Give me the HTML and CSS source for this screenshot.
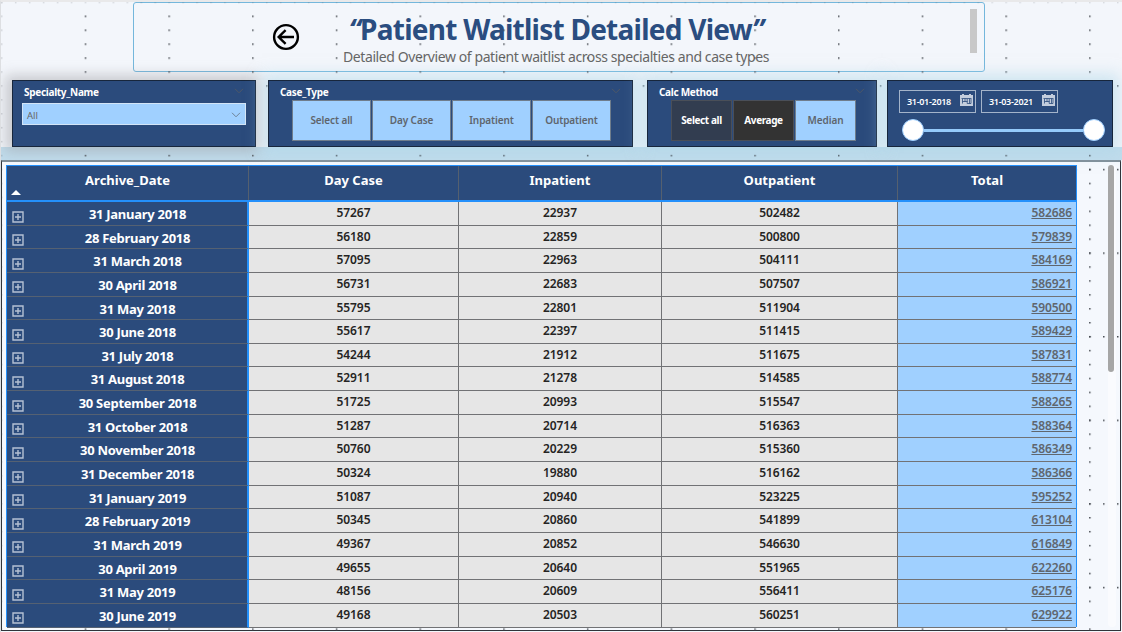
FILE: index.html
```html
<!DOCTYPE html>
<html lang="en">
<head>
<meta charset="utf-8">
<title>Patient Waitlist Detailed View</title>
<link rel="stylesheet" href="styles.css">
</head>
<body>
<div class="report">
  <svg class="grid-dots" width="1122" height="632" aria-hidden="true">
    <defs>
      <pattern id="cols" x="1" y="1.6" width="83.7" height="13.93" patternUnits="userSpaceOnUse"><rect x="0" y="0" width="1.5" height="1.5" fill="#454a50"/></pattern>
      <pattern id="rows" x="1" y="1.6" width="13.95" height="83.6" patternUnits="userSpaceOnUse"><rect x="0" y="0" width="1.5" height="1.5" fill="#454a50"/></pattern>
    </defs>
    <rect x="4" y="10" width="1118" height="622" fill="url(#cols)"/>
    <rect x="4" y="10" width="1118" height="622" fill="url(#rows)"/>
    <g opacity=".2"><rect width="4" height="632" fill="url(#cols)"/><rect y="1" width="1122" height="6" fill="url(#rows)"/></g>
  </svg>

  <header class="title-card">
    <svg class="back" viewBox="0 0 28 28"><circle cx="14" cy="14" r="11.9"/><path d="M22 14H6.5M13.6 7.2L6.7 14l6.9 6.8"/></svg>
    <div class="title-text">
      <h1><em>“</em>Patient Waitlist Detailed View<em>”</em></h1>
      <p>Detailed Overview of patient waitlist across specialties and case types</p>
    </div>
    <i class="title-scroll"></i>
  </header>

  <div class="filters">
    <section class="slicer specialty">
      <div class="slicer-head"><span>Specialty_Name</span><svg class="chev" viewBox="0 0 10 6"><path d="M1 .8l4 4 4-4"/></svg></div>
      <div class="dropdown"><span>All</span><svg class="chev" viewBox="0 0 10 6"><path d="M1 .8l4 4 4-4"/></svg></div>
    </section>
    <section class="slicer casetype">
      <div class="slicer-head"><span>Case_Type</span><svg class="chev" viewBox="0 0 10 6"><path d="M1 .8l4 4 4-4"/></svg></div>
      <div class="tiles"><b>Select all</b><b>Day Case</b><b>Inpatient</b><b>Outpatient</b></div>
    </section>
    <section class="slicer calc">
      <div class="slicer-head"><span>Calc Method</span><svg class="chev" viewBox="0 0 10 6"><path d="M1 .8l4 4 4-4"/></svg></div>
      <div class="tiles"><b class="hover">Select all</b><b class="on">Average</b><b>Median</b></div>
    </section>
    <section class="slicer dates">
      <div class="date-inputs">
        <div class="date"><span>31-01-2018</span><svg viewBox="0 0 13 12"><path class="cal-fill" d="M0 1h2V0h2v1h5V0h2v1h2v11H0z"/><path class="cal-ink" d="M1.5 4.5h10M2.5 5v4.5M5 4.5V8M7.2 5v4.5M9.5 4.5V9.500M11 5v4.500M2.500 7.500h5M7.200 9.500H11"/></svg></div>
        <div class="date"><span>31-03-2021</span><svg viewBox="0 0 13 12"><path class="cal-fill" d="M0 1h2V0h2v1h5V0h2v1h2v11H0z"/><path class="cal-ink" d="M1.5 4.5h10M2.5 5v4.5M5 4.5V8M7.2 5v4.5M9.5 4.5V9.500M11 5v4.500M2.500 7.500h5M7.200 9.500H11"/></svg></div>
      </div>
      <div class="range"><i class="knob"></i><i class="track"></i><i class="knob"></i></div>
    </section>
  </div>

  <main class="panel">
    <div class="matrix">
      <div class="row head">
        <div class="archive"><span>Archive_Date</span><i class="sort"></i></div><div>Day Case</div><div>Inpatient</div><div>Outpatient</div><div>Total</div>
      </div>
      <div class="body" id="body"></div>
    </div>
    <div class="scroll"><i></i></div>
  </main>
</div>
<script src="app.js"></script>
</body>
</html>
```
FILE: app.js
```js
const data = [
  ["31 January 2018", 57267, 22937, 502482, 582686],
  ["28 February 2018", 56180, 22859, 500800, 579839],
  ["31 March 2018", 57095, 22963, 504111, 584169],
  ["30 April 2018", 56731, 22683, 507507, 586921],
  ["31 May 2018", 55795, 22801, 511904, 590500],
  ["30 June 2018", 55617, 22397, 511415, 589429],
  ["31 July 2018", 54244, 21912, 511675, 587831],
  ["31 August 2018", 52911, 21278, 514585, 588774],
  ["30 September 2018", 51725, 20993, 515547, 588265],
  ["31 October 2018", 51287, 20714, 516363, 588364],
  ["30 November 2018", 50760, 20229, 515360, 586349],
  ["31 December 2018", 50324, 19880, 516162, 586366],
  ["31 January 2019", 51087, 20940, 523225, 595252],
  ["28 February 2019", 50345, 20860, 541899, 613104],
  ["31 March 2019", 49367, 20852, 546630, 616849],
  ["30 April 2019", 49655, 20640, 551965, 622260],
  ["31 May 2019", 48156, 20609, 556411, 625176],
  ["30 June 2019", 49168, 20503, 560251, 629922]
];
const plus = '<svg class="plus" viewBox="0 0 12 12"><path d="M1 1h10v10H1zM6 3v6M3 6h6"/></svg>';
document.getElementById("body").innerHTML = data.map(([d, ...n]) =>
  `<div class="row"><div class="archive">${plus}<span>${d}</span></div>` +
  n.map((v, i) => `<div class="${i === 3 ? "total" : "num"}"><span>${v}</span></div>`).join("") + "</div>"
).join("");
```
FILE: styles.css
```css
* { box-sizing: border-box; }
body { margin: 0; font-family: "Noto Sans", "Open Sans", sans-serif; }
h1, p { margin: 0; }
i { display: block; }
svg { fill: none; flex: none; }
.report {
  position: relative; width: 1122px; height: 632px; overflow: hidden;
  background: #f3f6fb; display: flex; flex-direction: column;
  border-top: 2px solid #e9e9ea; border-left: 1px solid #dddfe2;
}
.grid-dots { position: absolute; left: -1px; top: -2px; z-index: 1; pointer-events: none; }

.title-card {
  width: 852px; height: 70px; margin-left: 132px; flex: none;
  border: 1px solid #74b7dc; border-radius: 3px;
  display: flex; padding-left: 138px;
}
.back { width: 28px; height: 28px; margin-top: 20px; stroke: #000; stroke-width: 2.4; }
.title-text { flex: 1; display: flex; flex-direction: column; align-items: center; padding-right: 158px; }
h1 { font-size: 28px; line-height: 38px; margin-top: 7px; color: #2a4d80; font-weight: 700; white-space: nowrap; letter-spacing: -.75px; }
p { font-size: 14px; line-height: 18px; color: #666; white-space: nowrap; letter-spacing: -.41px; }
.title-scroll { width: 7px; height: 44px; background: #c8c8c8; margin: 6px 7px 0 0; }

.filters { display: flex; height: 68px; margin: 8px 0 0 11px; flex: none; position: relative; }
.slicer {
  background: #2b4b7c; border: 1px solid #17263c; height: 67px;
  box-shadow: 0 0 14px 6px rgba(172,213,232,.5);
  z-index: 2;
}
.filters::after {
  content: ""; position: absolute; left: -11px; right: 0; top: 67px; height: 13px;
  background: #c0dcec; z-index: 0;
}
.specialty { width: 244px; box-shadow: -2px 0 12px 5px rgba(150,150,155,.45); }
.casetype { width: 365px; margin-left: 12px; }
.calc { width: 230px; margin-left: 14px; }
.dates { width: 226px; margin-left: 10px; padding: 9px 7px 0 11px; }
.slicer-head { display: flex; justify-content: space-between; padding: 4px 11px 0; height: 19px; color: #fff; font-size: 10px; font-weight: 700; line-height: 14px; white-space: nowrap; letter-spacing: -.3px; }
.chev { width: 10px; height: 6px; stroke: #4f5867; stroke-width: 1; margin-top: 3px; }
.dropdown { width: 224px; height: 22px; margin: 3px 0 0 9px; border: 1px solid #d3e5f7; background: #a0d0ff; display: flex; align-items: center; justify-content: space-between; padding: 2px 4px 0; color: #666; font-size: 9.500px; }
.dropdown .chev { stroke: #6e8296; margin-top: 0; }
.tiles { display: flex; gap: 1px; margin-left: 23px; }
.tiles b { width: 79px; height: 41px; border: 1px solid #6f7d8c; background: #a0d0ff; color: #5e656d; font-size: 10px; line-height: 39px; text-align: center; font-weight: 600; letter-spacing: -.1px; }
.calc .tiles b { width: 61px; }
.tiles .hover, .tiles .on { color: #fff; border-color: #4a4f58; font-weight: 700; letter-spacing: -.4px; }
.tiles .hover { background: #323d50; }
.tiles .on { background: #333; }
.date-inputs { display: flex; gap: 5px; }
.date { width: 77px; height: 23px; border: 1px solid #a4b4ca; display: flex; justify-content: space-between; padding: 3px 2px 0 7px; color: #fff; font-size: 9px; line-height: 15px; font-weight: 600; letter-spacing: -.3px; }
.date svg { width: 13px; height: 12px; }
.cal-fill { fill: #c3cddd; }
.cal-ink { stroke: #2b4b7c; stroke-width: .8; }
.range { display: flex; align-items: center; margin: 6px 0 0 3px; }
.knob { width: 22px; height: 22px; border-radius: 50%; background: #fff; border: 1px solid #a0d0ff; flex: none; }
.track { height: 3px; background: #95cafa; flex: 1; }

.panel { flex: none; width: 1120px; height: 471px; margin-top: 12px; border: 1px solid #30343a; border-top: 2px solid #7f8d97; background: #f5f8fd; display: flex; padding: 3px 0 0 4px; }
.matrix { width: 1071px; height: 462px; border: 1px solid #2490fb; border-bottom: 0; position: relative; z-index: 2; }
.row { display: grid; grid-template-columns: 242px 210px 203px 236px 1fr; grid-template-rows: 100%; height: 23.65px; }
.row > div { border-right: 1px solid #717275; border-bottom: 1px solid #717275; text-align: center; font-size: 12px; font-weight: 600; line-height: 22px; color: #252423; background: #e6e6e6; letter-spacing: -.1px; }
.row > div:last-child { border-right: 0; }
.row.head { height: 36px; border-bottom: 2px solid #2490fb; }
.row.head > div { background: #2b4b7c; color: #fff; font-size: 13px; font-weight: 700; line-height: 29px; border-bottom: 0; border-color: #55606f; letter-spacing: 0; }
.row > .archive { position: relative; background: #2b4b7c; color: #fff; font-size: 13px; font-weight: 700; line-height: 24px; padding-left: 21px; border-bottom-color: #556172; border-right: 2px solid #2490fb; letter-spacing: -.28px; }
.row.head > .archive { padding-left: 0; border-right: 1px solid #55606f; letter-spacing: 0; }
.sort { position: absolute; left: 4px; bottom: 5px; border: 5.500px solid transparent; border-top: 0; border-bottom: 5px solid #fff; }
.plus { position: absolute; left: 4.500px; top: 8.500px; width: 12px; height: 12px; stroke: #b5c1d3; stroke-width: 1.4; }
.row > .total { background: #a0d0ff; color: #5f666e; text-align: right; padding-right: 4px; text-decoration: underline; }
.scroll { width: 8px; height: 462px; margin-left: 31px; background: #fafbfe; border-radius: 4px; position: relative; z-index: 2; }
.scroll i { width: 6px; height: 207px; margin-left: 0; border-radius: 3px; background: #a6a6a6; }
```
